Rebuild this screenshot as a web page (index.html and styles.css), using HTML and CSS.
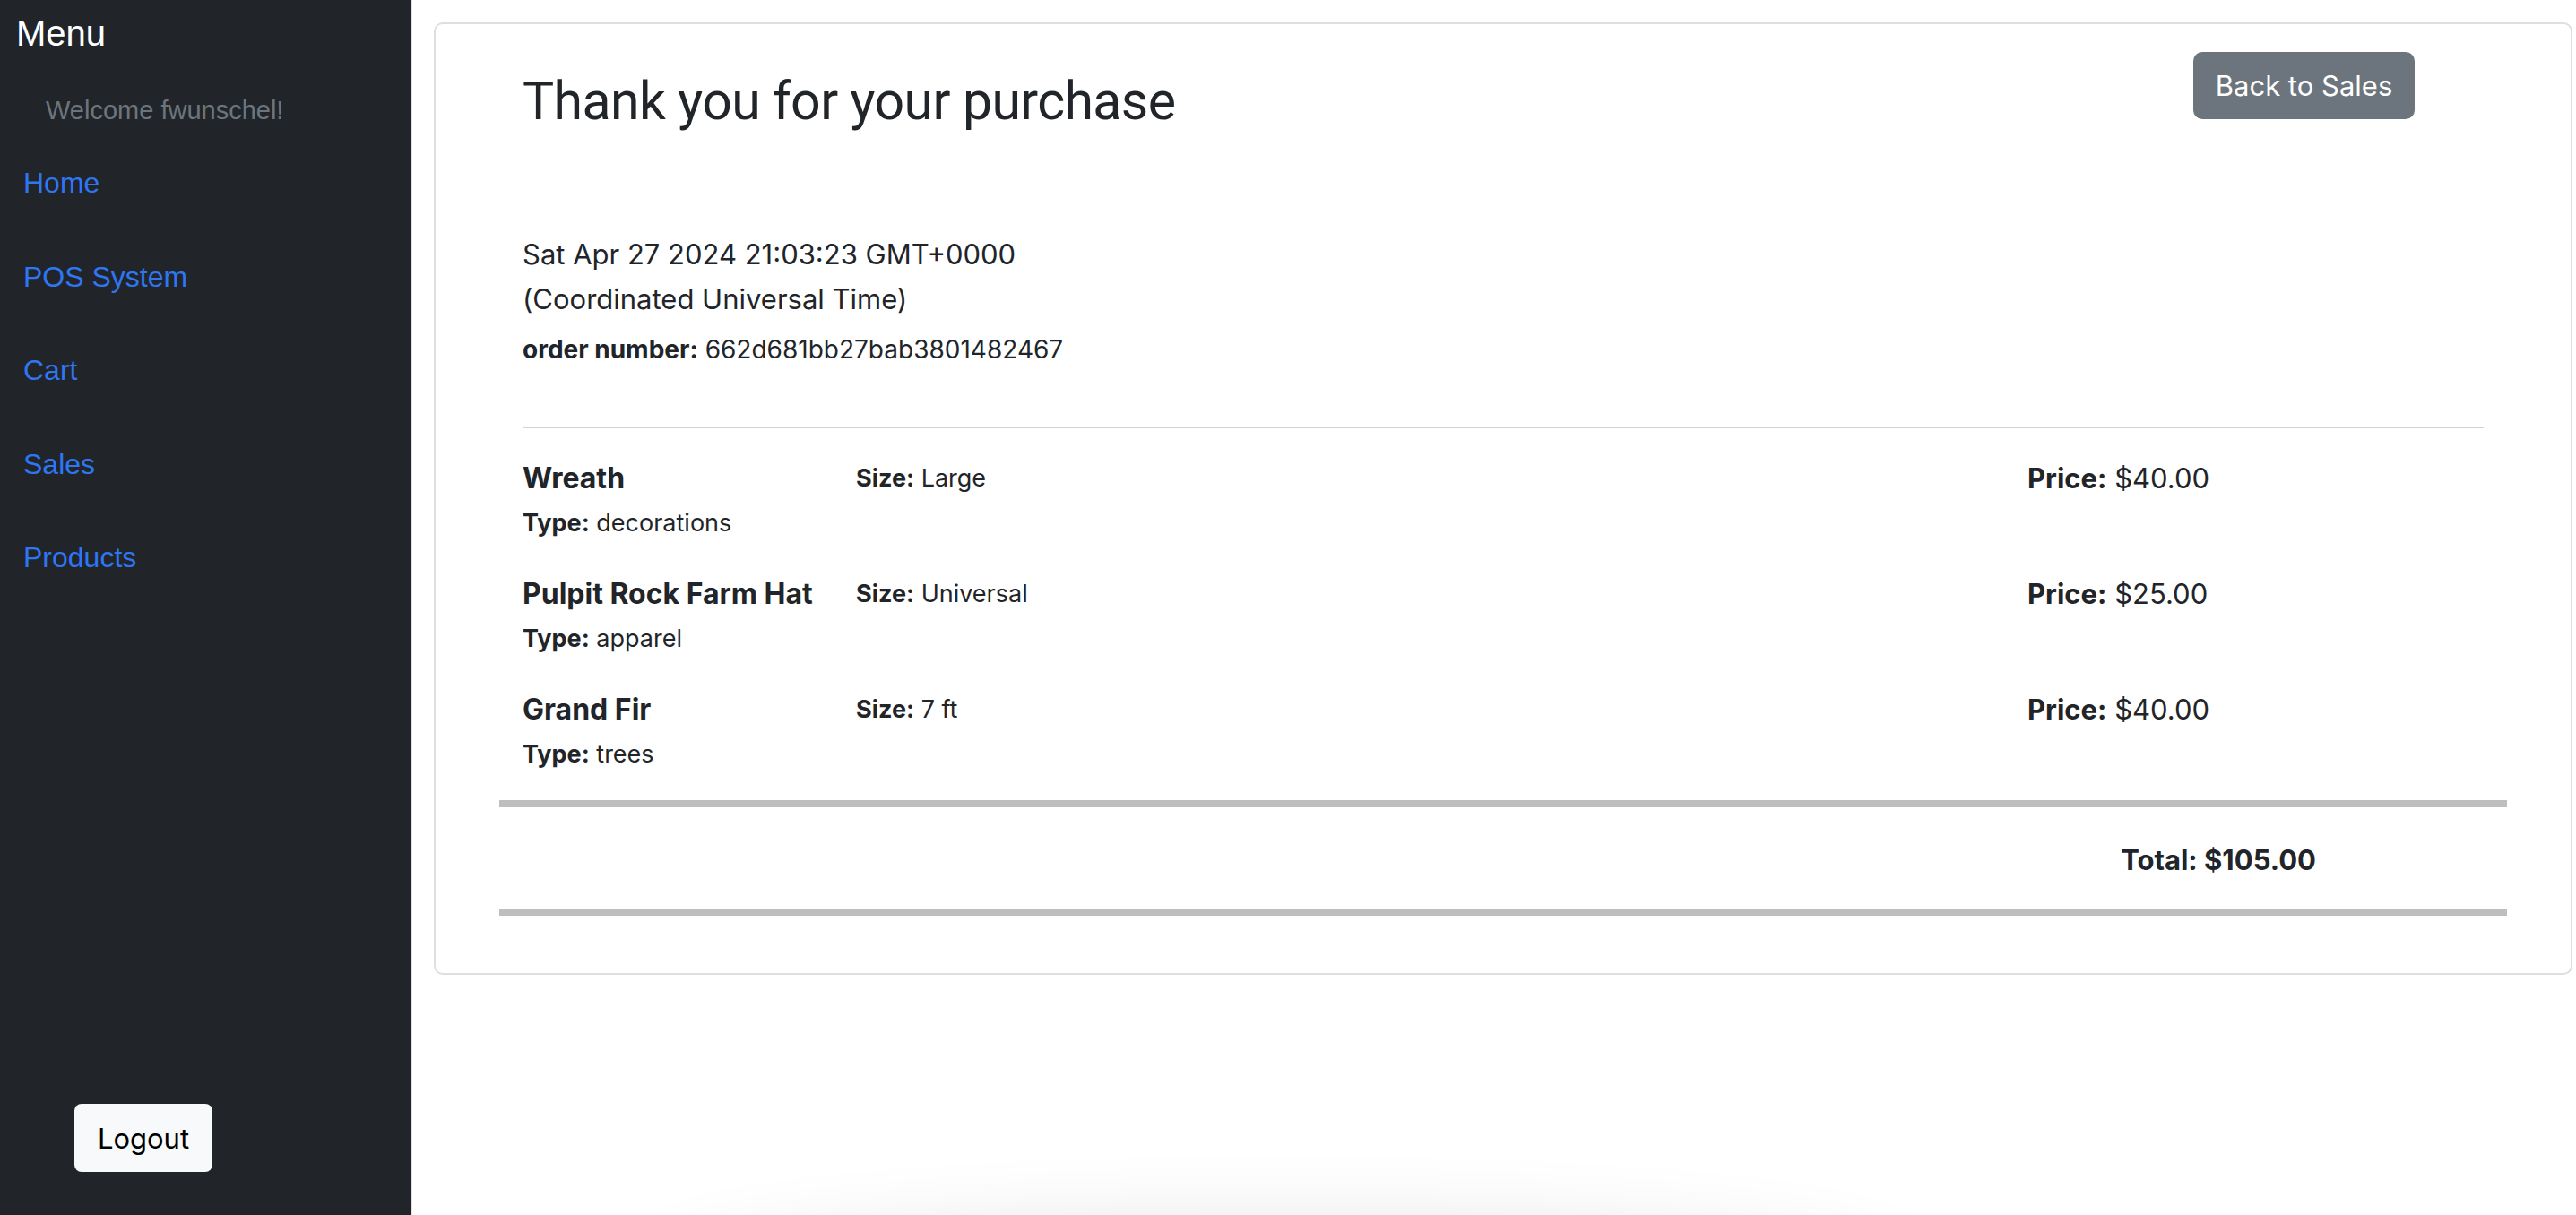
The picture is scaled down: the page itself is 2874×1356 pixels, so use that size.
FILE: index.html
```html
<!DOCTYPE html>
<html lang="en">
<head>
<meta charset="utf-8">
<title>Thank you for your purchase</title>
<link rel="stylesheet" href="styles.css">
</head>
<body>
<div class="layout">
  <aside class="sidebar">
    <div class="menu-title">Menu</div>
    <div class="welcome">Welcome fwunschel!</div>
    <nav class="nav">
      <a href="#" class="nav-link">Home</a>
      <a href="#" class="nav-link">POS System</a>
      <a href="#" class="nav-link">Cart</a>
      <a href="#" class="nav-link">Sales</a>
      <a href="#" class="nav-link">Products</a>
    </nav>
    <button class="logout">Logout</button>
  </aside>
  <main class="main">
    <section class="card">
      <div class="card-header">
        <h2 class="title">Thank you for your purchase</h2>
        <button class="back-btn">Back to Sales</button>
      </div>
      <div class="date">Sat Apr 27 2024 21:03:23 GMT+0000 (Coordinated Universal Time)</div>
      <div class="order"><b>order number:</b> 662d681bb27bab3801482467</div>
      <hr class="thin">
      <div class="items">
        <div class="item">
          <div class="item-name">Wreath</div>
          <div class="item-size"><b>Size:</b> Large</div>
          <div class="item-price"><b>Price:</b> $40.00</div>
          <div class="item-type"><b>Type:</b> decorations</div>
        </div>
        <div class="item">
          <div class="item-name">Pulpit Rock Farm Hat</div>
          <div class="item-size"><b>Size:</b> Universal</div>
          <div class="item-price"><b>Price:</b> $25.00</div>
          <div class="item-type"><b>Type:</b> apparel</div>
        </div>
        <div class="item">
          <div class="item-name">Grand Fir</div>
          <div class="item-size"><b>Size:</b> 7 ft</div>
          <div class="item-price"><b>Price:</b> $40.00</div>
          <div class="item-type"><b>Type:</b> trees</div>
        </div>
      </div>
      <div class="thick"></div>
      <div class="total">Total: $105.00</div>
      <div class="thick"></div>
    </section>
  </main>
</div>
<div class="floor-shadow"></div>
</body>
</html>
```

FILE: styles.css
```css
html, body {
  margin: 0;
  padding: 0;
  height: 100%;
  background: #fff;
}
body {
  font-family: Inter, "Noto Sans", sans-serif;
  color: #212529;
  overflow: hidden;
}
.layout {
  display: flex;
  height: 100vh;
}
.sidebar {
  width: 458px;
  flex: none;
  background: #212529;
  border-right: 2px solid #dee2e6;
  display: flex;
  flex-direction: column;
  font-family: "Liberation Sans", Arial, sans-serif;
}
.menu-title {
  color: #fff;
  font-size: 40px;
  line-height: 46px;
  padding: 14px 0 0 18px;
}
.welcome {
  color: #6c757d;
  font-size: 29px;
  line-height: 34px;
  padding: 46px 0 0 51px;
}
.nav {
  display: flex;
  flex-direction: column;
  padding: 12px 0 0 26px;
}
.nav-link {
  color: #2f76f2;
  text-decoration: none;
  font-size: 32px;
  line-height: 104.5px;
}
.logout {
  margin: auto 0 48px 83px;
  width: 154px;
  height: 76px;
  background: #f8f9fa;
  border: none;
  border-radius: 8px;
  color: #000;
  font-family: Inter, "Noto Sans", sans-serif;
  font-size: 31px;
  padding: 0;
}
.main {
  flex: 1;
  padding: 25px 4px 0 24px;
}
.card {
  border: 2px solid #dfdfdf;
  border-radius: 10px;
  padding: 0 97px 64px;
}
.card-header {
  display: flex;
  justify-content: space-between;
  align-items: flex-start;
}
.title {
  margin: 47px 0 0;
  font-family: Roboto, Inter, sans-serif;
  font-size: 59px;
  letter-spacing: -0.6px;
  font-weight: 400;
  line-height: 77px;
}
.back-btn {
  margin: 31px 77px 0 0;
  width: 247px;
  height: 75px;
  background: #6c757d;
  color: #fff;
  border: none;
  border-radius: 10px;
  font-family: Inter, "Noto Sans", sans-serif;
  font-size: 31px;
  padding: 0;
}
.date {
  margin-top: 108px;
  max-width: 700px;
  font-size: 31px;
  line-height: 50px;
}
.order {
  margin-top: 10px;
  font-size: 28px;
  line-height: 42px;
}
.thin {
  margin: 65px 0 0;
  border: none;
  border-top: 2px solid #d3d3d3;
  height: 0;
}
.items {
  margin-top: 30px;
  display: flex;
  flex-direction: column;
  gap: 29px;
}
.item {
  display: grid;
  grid-template-columns: 372px 1307px 1fr;
  grid-template-rows: 50px 50px;
  align-items: center;
}
.item-name {
  font-size: 32px;
  font-weight: 700;
}
.item-size {
  font-size: 27px;
}
.item-price {
  font-size: 31px;
}
.item-type {
  grid-column: 1 / span 3;
  font-size: 27px;
}
.thick {
  height: 8px;
  background: #bebebe;
  margin: 27px -26px 0;
}
.total {
  margin-top: 34px;
  margin-bottom: 29px;
  line-height: 50px;
  font-size: 31px;
  font-weight: 700;
  text-align: right;
  padding-right: 187px;
}
.total + .thick {
  margin-top: 0;
}
.floor-shadow {
  position: fixed;
  left: 760px;
  top: 1400px;
  width: 1340px;
  height: 80px;
  border-radius: 50%;
  box-shadow: 0 0 90px 30px rgba(0, 0, 0, 0.12);
}
```
